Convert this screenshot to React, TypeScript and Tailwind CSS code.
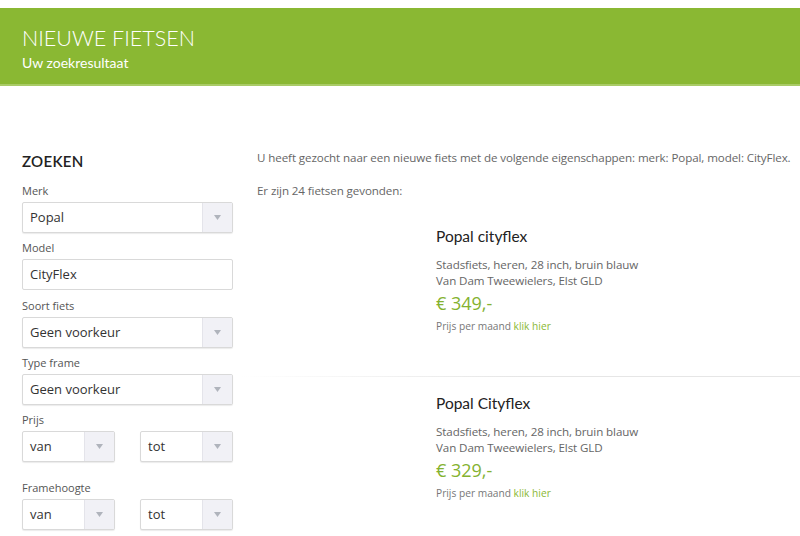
import React from "react";

const Arrow = () => (
  <div className="w-[30px] self-stretch bg-[#f1f1f6] border-l border-[#e4e4ea] flex items-center justify-center">
    <svg width="7" height="5" viewBox="0 0 7 5"><path d="M0 0 L7 0 L3.5 5 Z" fill="#b0b4bc" /></svg>
  </div>
);

const Select = ({ value, className = "" }: { value: string; className?: string }) => (
  <div className={`h-[31px] border border-[#d9d9d9] rounded-[2px] shadow-[0_1px_1px_rgba(0,0,0,0.08)] bg-white flex items-center ${className}`}>
    <div className="flex-1 pl-[7px] text-[13px] text-[#333]">{value}</div>
    <Arrow />
  </div>
);

const Label = ({ children, className = "" }: { children: React.ReactNode; className?: string }) => (
  <div className={`text-[11px] leading-[16px] text-[#555] mb-[3px] ${className}`}>{children}</div>
);

const Card = ({ title, price, className = "" }: { title: string; price: string; className?: string }) => (
  <div className={`pl-[179px] ${className}`}>
    <div className="text-[15.5px] leading-[20px] text-[#222]" style={{ fontFamily: "Lato, sans-serif" }}>{title}</div>
    <div className="mt-[11px] text-[11.6px] tracking-[-0.1px] leading-[16px] text-[#666]">
      <div>Stadsfiets, heren, 28 inch, bruin blauw</div>
      <div>Van Dam Tweewielers, Elst GLD</div>
    </div>
    <div className="mt-[1px] text-[18px] leading-[26px] text-[#84b230]">{price}</div>
    <div className="mt-[3px] text-[10.2px] leading-[14px] text-[#777]">
      Prijs per maand <span className="text-[#8ab833]">klik hier</span>
    </div>
  </div>
);

export default function App() {
  return (
    <div className="w-[800px] h-[536px] overflow-hidden bg-white" style={{ fontFamily: "'Open Sans', sans-serif" }}>
      <div className="mt-[8px] h-[78px] bg-[#8ab833] border-b-2 border-[#a9cb66] pl-[22px] pt-[17px] text-white" style={{ fontFamily: "Lato, sans-serif" }}>
        <div className="text-[21.5px] leading-[26px] font-light">NIEUWE FIETSEN</div>
        <div className="mt-[3px] text-[14px] leading-[18px]">Uw zoekresultaat</div>
      </div>
      <div className="flex pl-[22px] pt-[66px]">
        <div className="w-[211px] shrink-0">
          <div className="text-[15px] leading-[18px] font-semibold text-[#222] tracking-[0.3px]" style={{ fontFamily: "Lato, sans-serif" }}>ZOEKEN</div>
          <Label className="mt-[13px]">Merk</Label>
          <Select value="Popal" />
          <Label className="mt-[7px]">Model</Label>
          <div className="h-[31px] border border-[#d9d9d9] rounded-[2px] bg-white flex items-center pl-[7px] text-[13px] text-[#333]">CityFlex</div>
          <Label className="mt-[8px]">Soort fiets</Label>
          <Select value="Geen voorkeur" />
          <Label className="mt-[7px]">Type frame</Label>
          <Select value="Geen voorkeur" />
          <Label className="mt-[7px]">Prijs</Label>
          <div className="flex justify-between">
            <Select value="van" className="w-[93px]" />
            <Select value="tot" className="w-[93px]" />
          </div>
          <Label className="mt-[18px]">Framehoogte</Label>
          <div className="flex justify-between">
            <Select value="van" className="w-[93px]" />
            <Select value="tot" className="w-[93px]" />
          </div>
        </div>
        <div className="flex-1 ml-[24px] text-[12px] text-[#666]">
          <div className="leading-[18px] mt-[-3px] whitespace-nowrap text-[11.6px] tracking-[-0.1px]">U heeft gezocht naar een nieuwe fiets met de volgende eigenschappen: merk: Popal, model: CityFlex.</div>
          <div className="leading-[18px] mt-[15px] text-[11.6px] tracking-[-0.1px]">Er zijn 24 fietsen gevonden:</div>
          <Card title="Popal cityflex" price="€ 349,-" className="mt-[26px]" />
          <div className="mt-[43px] ml-[-17px] h-px bg-gradient-to-r from-white via-[#e6e6e6] to-[#e6e6e6]" />
          <Card title="Popal Cityflex" price="€ 329,-" className="mt-[16px]" />
        </div>
      </div>
    </div>
  );
}
